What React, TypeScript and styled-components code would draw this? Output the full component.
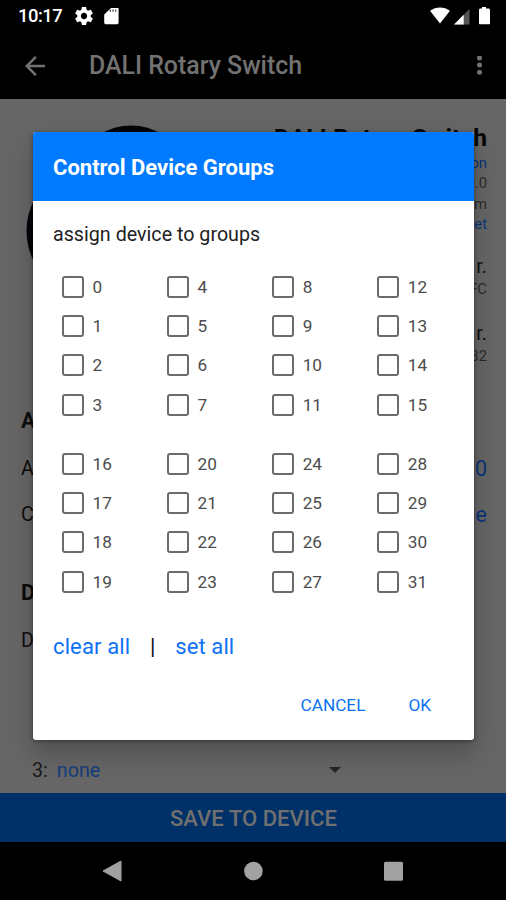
import React, { useState } from "react";
import styled, { createGlobalStyle } from "styled-components";

const GlobalStyle = createGlobalStyle`
  * { box-sizing: border-box; }
  body { margin: 0; background: #000; font-family: Roboto, sans-serif; }
  button { border: 0; padding: 0; background: none; font-family: inherit; cursor: pointer; }
  svg { display: block; }
`;

const Screen = styled.div`
  position: relative;
  width: 506px;
  height: 900px;
  display: flex;
  flex-direction: column;
  overflow: hidden;
  background: #000;
`;

const StatusBar = styled.header`
  height: 32px;
  flex: none;
  display: flex;
  align-items: center;
  justify-content: space-between;
  padding: 0 14px 0 18px;
  color: #fff;
`;

const StatusGroup = styled.div`
  display: flex;
  align-items: center;
`;

const Clock = styled.span`
  width: 57px;
  font-size: 18.4px;
  font-weight: 500;
  letter-spacing: -0.5px;
  line-height: 32px;
`;

const AppBar = styled.nav`
  height: 67px;
  flex: none;
  display: flex;
  align-items: center;
  padding: 0 21px 0 25px;
  color: #727272;
`;

const AppTitle = styled.h1`
  flex: 1;
  margin: 0 0 0 44px;
  font-size: 24.9px;
  font-weight: 500;
  line-height: 67px;
`;

const Content = styled.main`
  flex: 1;
  display: flex;
  flex-direction: column;
  background: #666;
  padding: 0 19px 0 21px;
  overflow: hidden;
`;

const Summary = styled.section`
  height: 303px;
  flex: none;
  display: flex;
  justify-content: space-between;
  padding-top: 26px;
`;

const Details = styled.div`
  display: flex;
  flex-direction: column;
  align-items: flex-end;
`;

const DeviceName = styled.h2`
  margin: 0 0 2px;
  font-size: 24.7px;
  font-weight: 700;
  line-height: 26px;
  color: #060606;
`;

const Detail = styled.span<{ $link?: boolean; $large?: boolean; $gap?: number }>`
  margin-top: ${(p) => p.$gap ?? 0}px;
  font-size: ${(p) => (p.$large ? 19.6 : 14.8)}px;
  line-height: 20.3px;
  color: ${(p) => (p.$link ? "#0a3575" : p.$large ? "#111" : "#2c2c2c")};
`;

const SectionHeading = styled.h3<{ $top?: number }>`
  flex: none;
  margin: ${(p) => p.$top ?? 0}px 0 0;
  font-size: 21.5px;
  font-weight: 700;
  line-height: 38px;
  color: #0d0d0d;
`;

const SettingRow = styled.div<{ $height: number }>`
  height: ${(p) => p.$height}px;
  flex: none;
  display: flex;
  align-items: center;
  justify-content: space-between;
  font-size: 19.7px;
  color: #0d0d0d;
`;

const SettingValue = styled.span`
  font-size: 21.5px;
  color: #0a3575;
`;

const SlotRow = styled.div`
  height: 46px;
  margin-top: auto;
  display: flex;
  align-items: center;
  padding-left: 11px;
  font-size: 19.7px;
  color: #1b1b1b;
`;

const SlotValue = styled.span`
  width: 272px;
  margin-left: 9px;
  color: #153d7c;
`;

const SaveButton = styled.button`
  height: 49px;
  flex: none;
  padding: 1px 0 0 1px;
  background: #003068;
  color: #707070;
  font-size: 22.1px;
  font-weight: 500;
  line-height: 48px;
`;

const NavBar = styled.footer`
  height: 58px;
  flex: none;
  display: flex;
  align-items: center;
  justify-content: space-between;
  padding: 0 102px;
`;

const Dialog = styled.section`
  position: absolute;
  left: 33px;
  top: 132px;
  width: 441px;
  height: 608px;
  display: flex;
  flex-direction: column;
  border-radius: 3px;
  overflow: hidden;
  background: #fff;
  box-shadow: 0 14px 26px rgba(0, 0, 0, 0.22), 0 1px 4px rgba(0, 0, 0, 0.4);
`;

const DialogTitle = styled.h2`
  height: 69px;
  flex: none;
  margin: 0;
  padding: 1px 20px 0;
  background: #007aff;
  color: #fff;
  font-size: 22px;
  font-weight: 700;
  line-height: 69px;
`;

const Prompt = styled.p`
  margin: 20px 20px 0;
  font-size: 19.7px;
  line-height: 28px;
  color: #222;
`;

const GroupGrid = styled.div<{ $top: number }>`
  display: grid;
  grid-template-columns: repeat(4, 105.1px);
  grid-template-rows: repeat(4, 39.3px);
  grid-auto-flow: column;
  margin: ${(p) => p.$top}px 0 0 28.5px;
`;

const GroupOption = styled.label`
  display: flex;
  align-items: center;
  font-size: 17.2px;
  color: #4c4c4c;
`;

const Checkbox = styled.input`
  appearance: none;
  width: 22px;
  height: 22px;
  margin: 0 9px 0 0;
  border: 2px solid #6b6b6b;
  border-radius: 3px;
  background: #fff;
  &:checked { background: #007aff; border-color: #007aff; }
`;

const BulkActions = styled.div`
  display: flex;
  align-items: center;
  margin: 32px 20px 0;
  line-height: 28px;
  font-size: 22px;
  color: #111;
`;

const Divider = styled.span`
  width: 45px;
  text-align: center;
`;

const LinkButton = styled.button`
  font-size: 22px;
  line-height: 28px;
  letter-spacing: 0.12px;
  color: #0b72f5;
`;

const DialogActions = styled.div`
  display: flex;
  justify-content: flex-end;
  gap: 43px;
  margin: 33px 43px 0 0;
`;

const DialogButton = styled.button`
  font-size: 17.2px;
  line-height: 22px;
  color: #0b72f5;
`;

const GearIcon = styled.svg`
  margin-right: 9px;
`;

const SignalIcon = styled.svg`
  margin: 0 7px 0 3px;
`;

const DeviceDrawing = () => (
  <svg width="220" height="220" viewBox="1 0 220 220">
    <ellipse cx="111" cy="31.5" rx="43" ry="31" fill="#050408" />
    <ellipse cx="111" cy="106" rx="104.5" ry="83" fill="#050408" />
  </svg>
);

const range = (start: number) => Array.from({ length: 16 }, (_, i) => start + i);

export default function App() {
  const [groups, setGroups] = useState<number[]>([]);
  const toggle = (id: number) =>
    setGroups((g) => (g.includes(id) ? g.filter((x) => x !== id) : [...g, id]));

  const renderGroups = (start: number, top: number) => (
    <GroupGrid $top={top}>
      {range(start).map((id) => (
        <GroupOption key={id}>
          <Checkbox type="checkbox" checked={groups.includes(id)} onChange={() => toggle(id)} />
          {id}
        </GroupOption>
      ))}
    </GroupGrid>
  );

  return (
    <>
      <GlobalStyle />
      <Screen>
        <StatusBar>
          <StatusGroup>
            <Clock>10:17</Clock>
            <GearIcon width="18" height="18" viewBox="2 2 20 20" fill="#fff">
              <path d="M19.43 12.98c.04-.32.07-.64.07-.98s-.03-.66-.07-.98l2.11-1.65c.19-.15.24-.42.12-.64l-2-3.46c-.12-.22-.39-.3-.61-.22l-2.49 1c-.52-.4-1.08-.73-1.69-.98l-.38-2.65C14.46 2.18 14.25 2 14 2h-4c-.25 0-.46.18-.49.42l-.38 2.65c-.61.25-1.17.59-1.69.98l-2.49-1c-.23-.09-.49 0-.61.22l-2 3.46c-.13.22-.07.49.12.64l2.11 1.65c-.04.32-.07.65-.07.98s.03.66.07.98l-2.11 1.65c-.19.15-.24.42-.12.64l2 3.46c.12.22.39.3.61.22l2.49-1c.52.4 1.08.73 1.69.98l.38 2.65c.03.24.24.42.49.42h4c.25 0 .46-.18.49-.42l.38-2.65c.61-.25 1.17-.59 1.69-.98l2.49 1c.23.09.49 0 .61-.22l2-3.46c.12-.22.07-.49-.12-.64l-2.11-1.65zM12 15.5c-1.93 0-3.5-1.57-3.5-3.5s1.57-3.5 3.5-3.5 3.5 1.57 3.5 3.5-1.57 3.5-3.5 3.5z" />
            </GearIcon>
            <svg width="20" height="20" viewBox="2 2 20 20" fill="#fff">
              <path d="M18 4h-7L4.2 10.5V18.5c0 1 .8 1.8 1.8 1.8h10.8c1 0 1.8-.8 1.8-1.8V5c0-.6-.2-1-.6-1z" />
              <path d="M10.3 5.4v2.3M13 5.4v2.3M15.7 5.4v2.3" stroke="#555" strokeWidth="1.4" />
            </svg>
          </StatusGroup>
          <StatusGroup>
            <svg width="22" height="18" viewBox="0 0 22 18" fill="#fff">
              <path d="M1 3.8C6.8-.7 15.2-.7 21 3.8L11 16.5z" />
            </svg>
            <SignalIcon width="16" height="17" viewBox="0 0 16 17">
              <path d="M0 16.5 15.5 1v15.5z" fill="#555" />
              <path d="M0 16.5 9.7 6.8v9.7z" fill="#fff" />
            </SignalIcon>
            <svg width="15" height="18" viewBox="0 0 15 18" fill="#fff">
              <path d="M5 0h4v1.5h2.5c.9 0 1.5.6 1.5 1.5v13.200c0 .6-.4 1-1 1H3c-.6 0-1-.4-1-1V3c0-.9.6-1.5 1.5-1.5H5z" />
            </svg>
          </StatusGroup>
        </StatusBar>
        <AppBar>
          <svg width="20" height="20" viewBox="4 4 16 16" fill="currentColor">
            <path d="M20 11H7.83l5.59-5.59L12 4l-8 8 8 8 1.41-1.41L7.83 13H20v-2z" />
          </svg>
          <AppTitle>DALI Rotary Switch</AppTitle>
          <svg width="12" height="20" viewBox="0 0 12 20" fill="currentColor">
            <circle cx="6.5" cy="1.9" r="2.5" />
            <circle cx="6.5" cy="9" r="2.5" />
            <circle cx="6.5" cy="16.2" r="2.5" />
          </svg>
        </AppBar>
        <Content>
          <Summary>
            <DeviceDrawing />
            <Details>
              <DeviceName>DALI Rotary Switch</DeviceName>
              <Detail $link>on</Detail>
              <Detail>.0</Detail>
              <Detail>m</Detail>
              <Detail $link>et</Detail>
              <Detail $large $gap={23}>r.</Detail>
              <Detail $gap={2}>FC</Detail>
              <Detail $large $gap={24}>r.</Detail>
              <Detail $gap={2}>82</Detail>
            </Details>
          </Summary>
          <SectionHeading>A</SectionHeading>
          <SettingRow $height={56}>A<SettingValue>0</SettingValue></SettingRow>
          <SettingRow $height={37}>C<SettingValue>e</SettingValue></SettingRow>
          <SectionHeading $top={41}>D</SectionHeading>
          <SettingRow $height={56}>D</SettingRow>
          <SlotRow>
            3:<SlotValue>none</SlotValue>
            <svg width="12" height="6" viewBox="0 0 12 6"><path d="M0 0h12L6 6z" fill="#262626" /></svg>
          </SlotRow>
        </Content>
        <SaveButton>SAVE TO DEVICE</SaveButton>
        <NavBar>
          <svg width="20" height="22" viewBox="0 0 20 22"><path d="M1 11 19 1v20z" fill="#a1a1a1" stroke="#a1a1a1" strokeLinejoin="round" /></svg>
          <svg width="20" height="20" viewBox="0 0 20 20"><circle cx="10.4" cy="10" r="9.3" fill="#a1a1a1" /></svg>
          <svg width="20" height="20" viewBox="0 0 20 20"><rect x="0" y=".7" width="19" height="19" rx="1.5" fill="#a1a1a1" /></svg>
        </NavBar>
        <Dialog role="dialog">
          <DialogTitle>Control Device Groups</DialogTitle>
          <Prompt>assign device to groups</Prompt>
          {renderGroups(0, 18)}
          {renderGroups(16, 20)}
          <BulkActions>
            <LinkButton onClick={() => setGroups([])}>clear all</LinkButton>
            <Divider>|</Divider>
            <LinkButton onClick={() => setGroups([...range(0), ...range(16)])}>set all</LinkButton>
          </BulkActions>
          <DialogActions>
            <DialogButton>CANCEL</DialogButton>
            <DialogButton>OK</DialogButton>
          </DialogActions>
        </Dialog>
      </Screen>
    </>
  );
}
